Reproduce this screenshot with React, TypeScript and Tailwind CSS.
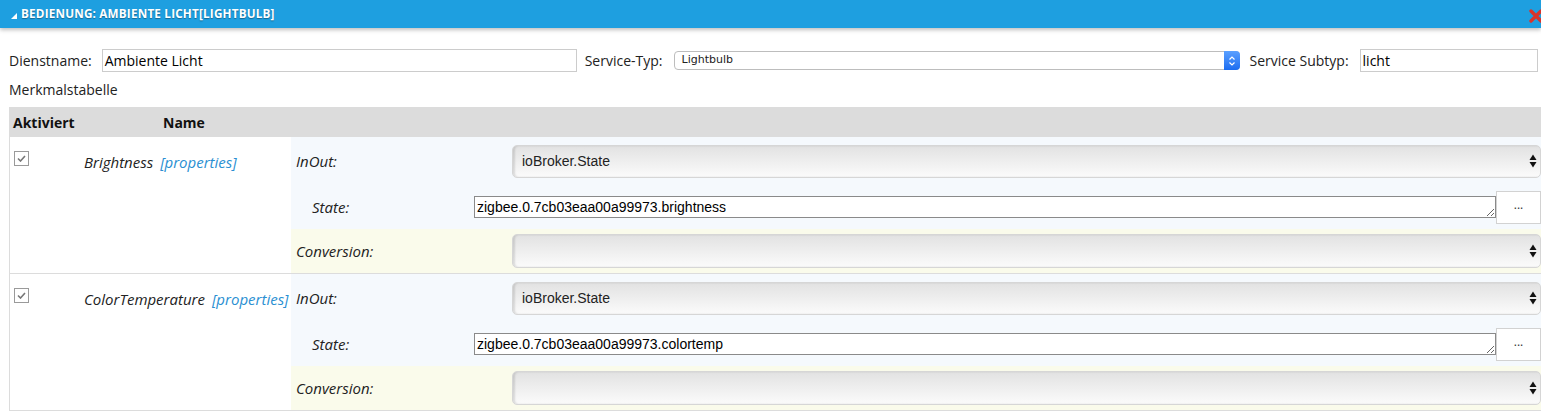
const data = [
  { name: 'Brightness', state: 'zigbee.0.7cb03eaa00a99973.brightness' },
  { name: 'ColorTemperature', state: 'zigbee.0.7cb03eaa00a99973.colortemp' },
];

const Arrows = () => (
  <svg width="8" height="14" viewBox="0 0 8 14" className="absolute right-[3px] top-1/2 -translate-y-1/2">
    <path d="M4 0.5 L7.5 6 L0.5 6 Z" fill="#111" />
    <path d="M4 13.5 L7.5 8 L0.5 8 Z" fill="#111" />
  </svg>
);

const GradientSelect = ({ value, h }: { value?: string; h: string }) => (
  <div
    className={`relative flex-1 ${h} rounded-[5px] border border-[#d6d6d6] bg-gradient-to-b from-[#e2e2e2] to-[#fbfbfb] shadow-[inset_2px_0_2px_rgba(0,0,0,0.12)] flex items-center pl-[9px] font-['Liberation_Sans',sans-serif] text-[14px] text-[#222]`}
  >
    {value}
    <Arrows />
  </div>
);

const Checkbox = () => (
  <div className="w-[15px] h-[15px] border border-[#9a9a9a] bg-white flex items-center justify-center">
    <svg width="9" height="7" viewBox="0 0 9 7">
      <path d="M1 3.5 L3.5 6 L8 1" stroke="#777" strokeWidth="1.6" fill="none" />
    </svg>
  </div>
);

const CharRow = ({ name, state }: { name: string; state: string }) => (
  <div className="flex border-b border-[#dcdcdc]">
    <div className="w-[282px] flex border-l border-[#dcdcdc] bg-white">
      <div className="w-[74px] pl-[4px] pt-[14px]">
        <Checkbox />
      </div>
      <div className="pt-[15px] text-[15px] leading-[20px] italic text-[#222] whitespace-nowrap">
        {name}
        <span className="ml-[7px] text-[#2a8fd2]">[properties]</span>
      </div>
    </div>
    <div className="flex-1 flex flex-col">
      <div className="h-[48px] flex items-center bg-[#f5f9fd]">
        <div className="w-[221px] pl-[5px] text-[15px] italic text-[#222]">InOut:</div>
        <GradientSelect value="ioBroker.State" h="h-[33px]" />
      </div>
      <div className="h-[44px] flex items-center bg-[#f5f9fd]">
        <div className="w-[183px] pl-[21px] text-[15px] italic text-[#222]">State:</div>
        <textarea
          readOnly
          rows={1}
          value={state}
          className="flex-1 h-[22px] border border-[#8a8a8a] bg-white px-[2px] py-0 text-[14px] leading-[20px] font-['Liberation_Sans',sans-serif] text-black overflow-hidden outline-none"
        />
        <div className="w-[45px] h-[33px] border border-[#d2d2d2] bg-white flex items-center justify-center text-[12px] leading-none text-[#333] pb-[4px]">
          ...
        </div>
      </div>
      <div className="h-[44px] flex items-center bg-[#fafbeb]">
        <div className="w-[221px] pl-[5px] text-[15px] italic text-[#222]">Conversion:</div>
        <GradientSelect h="h-[34px]" />
      </div>
    </div>
  </div>
);

export default function App() {
  return (
    <div className="w-[1541px] h-[414px] overflow-hidden bg-white font-['Open_Sans',sans-serif] text-[#222]">
      <div className="relative h-[28px] bg-[#1e9fe0] flex items-center shadow-[0_2px_4px_rgba(0,0,0,0.25)]">
        <svg width="6" height="6" viewBox="0 0 6 6" className="ml-[11px] mt-[3px]">
          <path d="M6 0 L6 6 L0 6 Z" fill="#fff" />
        </svg>
        <span className="ml-[4px] text-[11.7px] font-bold uppercase text-white tracking-[0.2px] [text-shadow:0_1px_1px_rgba(0,0,0,0.35)]">
          Bedienung: Ambiente Licht[Lightbulb]
        </span>
        <svg width="14" height="14" viewBox="0 0 14 14" className="absolute right-[-2px] top-[9px]">
          <path d="M2 2 L12 12 M12 2 L2 12" stroke="#d9342b" strokeWidth="3.4" strokeLinecap="round" />
        </svg>
      </div>

      <div className="pl-[9px] pt-[21px]">
        <div className="flex items-center h-[23px] text-[14px]">
          <span>Dienstname:</span>
          <div className="ml-[10px] w-[475px] h-[23px] border border-[#cccccc] flex items-center pl-[2px] text-[14px] text-black">
            Ambiente Licht
          </div>
          <span className="ml-[8px]">Service-Typ:</span>
          <div className="relative ml-[11px] w-[566px] h-[19px] border border-[#bdbdbd] rounded-[4px] bg-white flex items-center pl-[7px] font-['DejaVu_Sans',sans-serif] text-[11px] text-[#222]">
            Lightbulb
            <div className="absolute right-[-1px] top-[-1px] w-[16px] h-[19px] rounded-r-[4px] bg-gradient-to-b from-[#5aa0ff] to-[#1a6cf0] flex items-center justify-center">
              <svg width="8" height="12" viewBox="0 0 8 12">
                <path d="M1.5 4.5 L4 2 L6.5 4.5 M1.5 7.5 L4 10 L6.5 7.5" stroke="#fff" strokeWidth="1.2" fill="none" />
              </svg>
            </div>
          </div>
          <span className="ml-[10px]">Service Subtyp:</span>
          <div className="ml-[11px] w-[178px] h-[23px] border border-[#cccccc] flex items-center pl-[2px] text-[14px] text-black">
            licht
          </div>
        </div>

        <div className="mt-[8px] text-[14px] leading-[20px]">Merkmalstabelle</div>

        <div className="mt-[7px]">
          <div className="h-[30px] bg-[#dcdcdc] flex items-center text-[14px] font-bold text-[#111]">
            <span className="w-[154px] pl-[4px]">Aktiviert</span>
            <span>Name</span>
          </div>
          {data.map((r) => (
            <CharRow key={r.name} name={r.name} state={r.state} />
          ))}
        </div>
      </div>
    </div>
  );
}
